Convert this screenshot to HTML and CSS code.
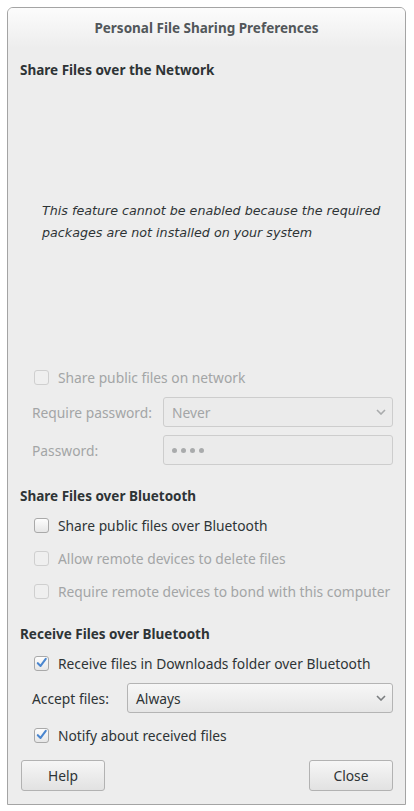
FILE: index.html
```html
<!DOCTYPE html>
<html>
<head>
<meta charset="utf-8">
<link rel="stylesheet" href="styles.css">
</head>
<body>
<div class="window">
  <div class="titlebar">Personal File Sharing Preferences</div>
  <div class="content">
    <div class="heading h-first">Share Files over the Network</div>
    <div class="message">This feature cannot be enabled because the required packages are not installed on your system</div>
    <div class="check disabled r-net"><span class="box"></span><span>Share public files on network</span></div>
    <div class="field disabled f-first">
      <span class="label lw-net">Require password:</span>
      <div class="combo"><span>Never</span><svg class="chev" width="10" height="6" viewBox="0 0 10 6"><path d="M1 1 L5 5 L9 1" fill="none" stroke="currentColor" stroke-width="1.6"/></svg></div>
    </div>
    <div class="field disabled f-next">
      <span class="label lw-net">Password:</span>
      <div class="entry"><span class="dot"></span><span class="dot"></span><span class="dot"></span><span class="dot"></span></div>
    </div>
    <div class="heading h-sec">Share Files over Bluetooth</div>
    <div class="check r-first"><span class="box"></span><span>Share public files over Bluetooth</span></div>
    <div class="check disabled r-next"><span class="box"></span><span>Allow remote devices to delete files</span></div>
    <div class="check disabled r-next"><span class="box"></span><span>Require remote devices to bond with this computer</span></div>
    <div class="heading h-sec">Receive Files over Bluetooth</div>
    <div class="check r-first"><span class="box checked"><svg width="14" height="14" viewBox="0 0 14 14"><path d="M3 7.2 L6 10.2 L11.6 2.6" fill="none" stroke="#4a86cf" stroke-width="2.2" stroke-linecap="round" stroke-linejoin="round"/></svg></span><span>Receive files in Downloads folder over Bluetooth</span></div>
    <div class="field f-accept">
      <span class="label lw-acc">Accept files:</span>
      <div class="combo"><span>Always</span><svg class="chev" width="10" height="6" viewBox="0 0 10 6"><path d="M1 1 L5 5 L9 1" fill="none" stroke="currentColor" stroke-width="1.6"/></svg></div>
    </div>
    <div class="check r-last"><span class="box checked"><svg width="14" height="14" viewBox="0 0 14 14"><path d="M3 7.2 L6 10.2 L11.6 2.6" fill="none" stroke="#4a86cf" stroke-width="2.2" stroke-linecap="round" stroke-linejoin="round"/></svg></span><span>Notify about received files</span></div>
    <div class="buttons">
      <button class="btn">Help</button>
      <button class="btn">Close</button>
    </div>
  </div>
</div>
</body>
</html>
```
FILE: styles.css
```css
html, body {
  margin: 0;
  padding: 0;
  background: #ffffff;
}
body {
  padding: 7px 0 0 7px;
  font-family: "Noto Sans", "DejaVu Sans", sans-serif;
  font-size: 13.8px;
  color: #2e3436;
}
.window {
  box-sizing: border-box;
  width: 399px;
  height: 798px;
  border: 1px solid #a4a4a4;
  border-radius: 6px 6px 0 0;
  background: #ededed;
  display: flex;
  flex-direction: column;
  overflow: hidden;
}
.titlebar {
  height: 40px;
  flex: none;
  display: flex;
  align-items: center;
  justify-content: center;
  font-weight: bold;
  font-size: 13.5px;
  color: #52575a;
  background: linear-gradient(#fcfcfc, #ededed);
  padding-bottom: 1px;
  box-sizing: border-box;
}
.content {
  flex: 1;
  display: flex;
  flex-direction: column;
  padding: 0 12px 13px 12px;
}
.heading {
  font-weight: bold;
  font-size: 13.5px;
  line-height: 20px;
  height: 20px;
}
.h-first { margin-top: 12px; }
.h-sec { margin-top: 21px; }
.message {
  margin-top: 120px;
  padding-left: 22px;
  padding-right: 4px;
  font-family: "DejaVu Sans", sans-serif;
  font-size: 12.7px;
  font-style: oblique;
  line-height: 22px;
}
.check {
  display: flex;
  align-items: center;
  height: 24px;
  padding-left: 14px;
  gap: 9px;
}
.r-net { margin-top: 121px; }
.r-first { margin-top: 7px; }
.r-next { margin-top: 9px; }
.r-last { margin-top: 10px; }
.box {
  box-sizing: border-box;
  width: 15px;
  height: 15px;
  border: 1px solid #a9a9a9;
  border-radius: 3px;
  background: linear-gradient(#fdfdfd, #e6e6e6);
  display: flex;
  align-items: center;
  justify-content: center;
  flex: none;
}
.box svg { display: block; }
.disabled { color: #a3a5a6; }
.disabled .box {
  border-color: #cfcfcf;
  background: #efefef;
}
.field {
  display: flex;
  align-items: center;
  height: 30px;
  padding-left: 12px;
}
.f-first { margin-top: 8px; }
.f-next { margin-top: 8px; }
.f-accept { margin-top: 8px; }
.label { flex: none; }
.lw-net { width: 131px; }
.lw-acc { width: 95px; }
.combo, .entry {
  flex: 1;
  box-sizing: border-box;
  height: 30px;
  border: 1px solid #b4b4b4;
  border-radius: 3px;
  display: flex;
  align-items: center;
  padding-left: 8px;
  padding-right: 6px;
}
.combo {
  justify-content: space-between;
  background: linear-gradient(#f7f7f7, #e6e6e6);
  color: #2e3436;
}
.chev { color: #7b7e80; display: block; }
.disabled .combo, .disabled .entry {
  border-color: #cdcdcd;
  background: #ebebeb;
  color: #a3a5a6;
}
.disabled .chev { color: #a9abac; }
.entry { gap: 4px; padding-left: 8px; }
.dot {
  width: 5px;
  height: 5px;
  border-radius: 50%;
  background: #a9abac;
}
.buttons {
  margin-top: 13px;
  display: flex;
  justify-content: space-between;
  padding-left: 1px;
}
.btn {
  box-sizing: border-box;
  width: 84px;
  height: 31px;
  border: 1px solid #b2b2b2;
  border-radius: 3px;
  background: linear-gradient(#f6f6f6, #e2e2e2);
  font-family: inherit;
  font-size: 13.8px;
  color: #2e3436;
  padding: 0;
}
```
